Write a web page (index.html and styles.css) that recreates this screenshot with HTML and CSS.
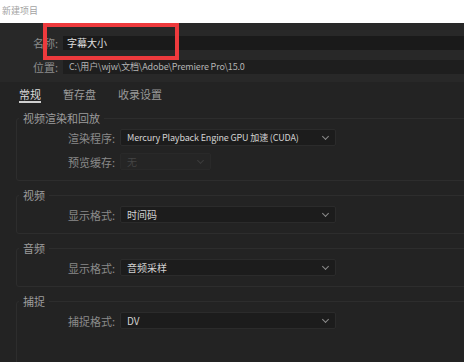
FILE: index.html
```html
<!DOCTYPE html>
<html lang="zh-CN">
<head>
    <meta charset="UTF-8">
    <meta name="viewport" content="width=device-width, initial-scale=1.0">
    <title>新建项目</title>
    <link rel="stylesheet" href="styles.css">
</head>
<body>
    <div class="window-title">新建项目</div>

    <div class="dialog">
        <div class="project-head">
            <div class="head-row">
                <span class="head-label">名称:</span>
                <div class="text-field name-field">字幕大小</div>
            </div>
            <div class="head-row">
                <span class="head-label">位置:</span>
                <div class="text-field path-field">C:\用户\wjw\文档\Adobe\Premiere Pro\15.0</div>
            </div>
        </div>

        <div class="tabs">
            <span class="tab active">常规</span>
            <span class="tab">暂存盘</span>
            <span class="tab">收录设置</span>
        </div>

        <fieldset class="group">
            <legend>视频渲染和回放</legend>
            <div class="field-row">
                <span class="field-label">渲染程序:</span>
                <div class="select narrow">Mercury Playback Engine GPU 加速 (CUDA)<span class="chevron"></span></div>
            </div>
            <div class="field-row">
                <span class="field-label">预览缓存:</span>
                <div class="select short disabled">无<span class="chevron"></span></div>
            </div>
        </fieldset>

        <fieldset class="group">
            <legend>视频</legend>
            <div class="field-row">
                <span class="field-label">显示格式:</span>
                <div class="select">时间码<span class="chevron"></span></div>
            </div>
        </fieldset>

        <fieldset class="group">
            <legend>音频</legend>
            <div class="field-row">
                <span class="field-label">显示格式:</span>
                <div class="select">音频采样<span class="chevron"></span></div>
            </div>
        </fieldset>

        <fieldset class="group last">
            <legend>捕捉</legend>
            <div class="field-row">
                <span class="field-label">捕捉格式:</span>
                <div class="select">DV<span class="chevron"></span></div>
            </div>
        </fieldset>
    </div>

    <!-- highlight drawn over the name field -->
    <div class="highlight"></div>
</body>
</html>
```

FILE: styles.css
```css
body {
    margin: 0;
    width: 464px;
    height: 362px;
    overflow: hidden;
    position: relative;
    background-color: #232323;
    font-family: "Noto Sans CJK SC", "Noto Sans", sans-serif;
    font-size: 11px;
}

.window-title {
    height: 23px;
    line-height: 22px;
    padding-left: 2px;
    background-color: #ffffff;
    color: #a3a3a3;
    font-size: 9px;
}

.dialog {
    width: 620px;
}

.project-head {
    background-color: #282828;
    padding: 13px 0 8px;
}

.head-row {
    display: flex;
    align-items: center;
    height: 14px;
}

.head-row + .head-row {
    margin-top: 10px;
}

.head-label {
    width: 58px;
    margin-right: 5px;
    text-align: right;
    color: #8c8c8c;
}

.text-field {
    flex: 1;
    height: 14px;
    line-height: 14px;
    padding-left: 4px;
    font-size: 10px;
    white-space: nowrap;
}

.name-field {
    background-color: #1a1a1a;
    color: #e0e0e0;
}

.path-field {
    background-color: #1e1e1e;
    color: #b4b4b4;
    padding-left: 6px;
    font-size: 9px;
    letter-spacing: -0.15px;
}

.tabs {
    display: flex;
    gap: 22px;
    height: 19px;
    padding: 5px 0 0 19px;
}

.tab {
    color: #9a9a9a;
    line-height: 14px;
    height: 14px;
}

.tab.active {
    color: #dcdcdc;
    border-bottom: 2px solid #cfcfcf;
}

.group {
    margin: 5px 0 0 16px;
    padding: 5px 0 11px;
    border: 1px solid #2d2d2d;
    border-radius: 3px;
    min-width: 0;
}

.group + .group {
    margin-top: 7px;
}

.group.last {
    height: 80px;
}

.group legend {
    margin-left: 2px;
    padding: 0 4px;
    line-height: 14px;
    color: #9c9c9c;
}

.field-row {
    display: flex;
    align-items: center;
    height: 15px;
}

.field-row + .field-row {
    margin-top: 9px;
}

.field-label {
    width: 98px;
    margin-right: 5px;
    text-align: right;
    color: #8a8a8a;
}

.select {
    position: relative;
    width: 208px;
    height: 15px;
    line-height: 15px;
    padding-left: 6px;
    background-color: #1c1c1c;
    border: 1px solid #2b2b2b;
    border-radius: 2px;
    color: #d2d2d2;
    font-size: 10px;
    white-space: nowrap;
}

.select.narrow {
    font-size: 9px;
    letter-spacing: -0.15px;
}

.select.short {
    width: 83px;
}

.select.disabled {
    background-color: #252525;
    border-color: #292929;
    color: #444444;
}

.chevron {
    position: absolute;
    right: 7px;
    top: 4px;
    width: 4px;
    height: 4px;
    border-right: 1px solid #8a8a8a;
    border-bottom: 1px solid #8a8a8a;
    transform: rotate(45deg);
}

.select.disabled .chevron {
    border-color: #3c3c3c;
}

.highlight {
    position: absolute;
    left: 43px;
    top: 23px;
    width: 128px;
    height: 29px;
    border: 4px solid #ee3a3d;
}
```
